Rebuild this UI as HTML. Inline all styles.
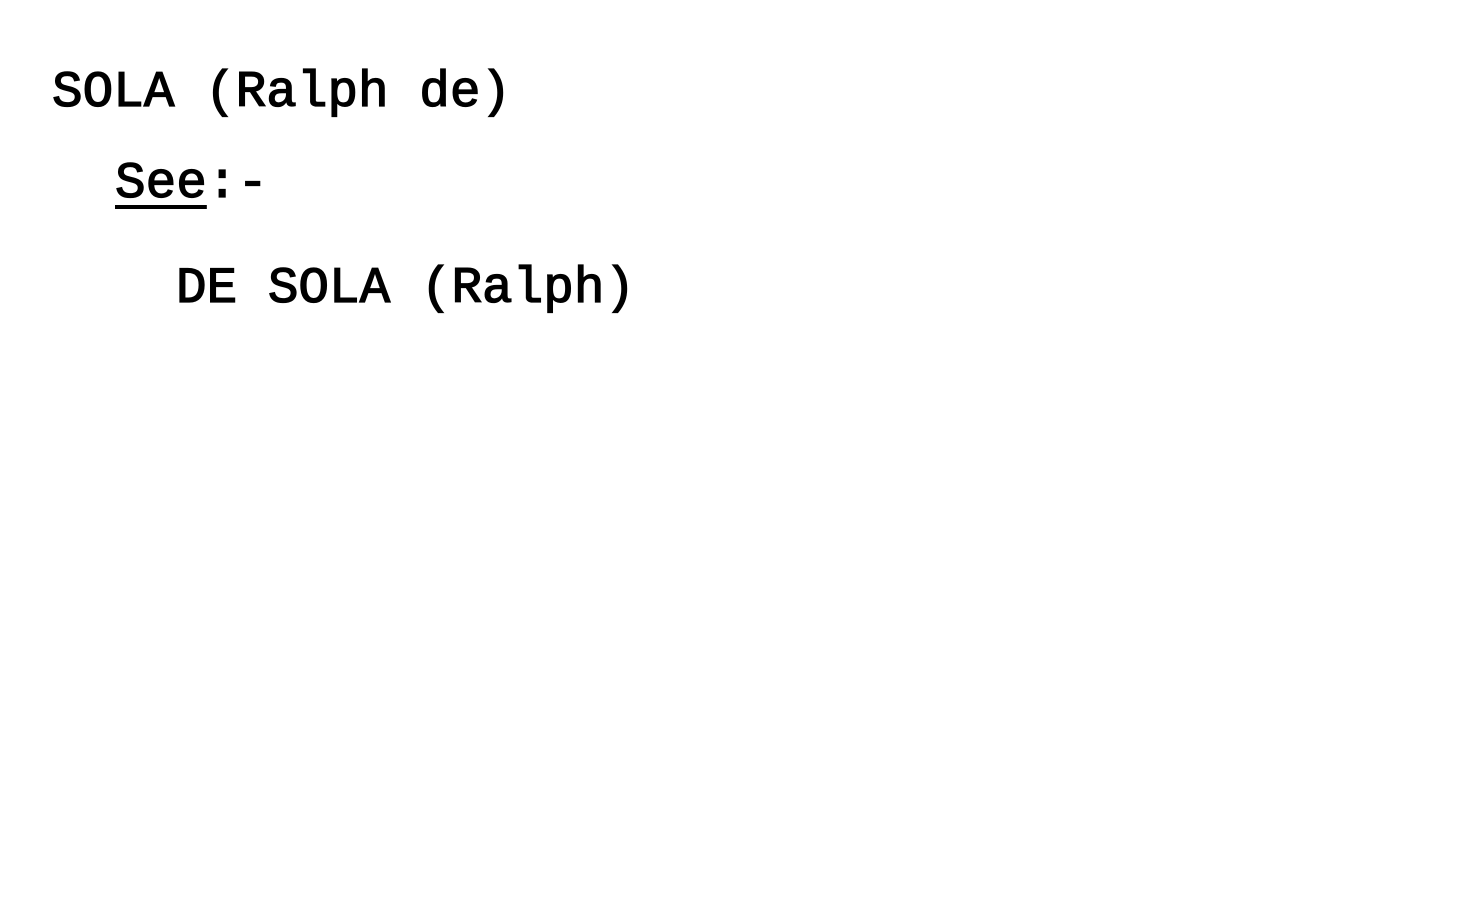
<!DOCTYPE html>
<html><head><style>
html,body{margin:0;padding:0;background:#fff;width:1481px;height:900px;overflow:hidden}
.t{position:absolute;font-family:"Liberation Mono",monospace;font-size:51px;line-height:normal;color:#000;white-space:pre;font-weight:normal;-webkit-text-stroke:1.3px #000}
</style></head><body>
<div class="t" style="left:52px;top:65px">SOLA (Ralph de)</div>
<div class="t" style="left:115px;top:156px"><span style="text-decoration:underline;text-underline-offset:8px;text-decoration-thickness:4px">See</span>:-</div>
<div class="t" style="left:176px;top:261px">DE SOLA (Ralph)</div>
</body></html>
